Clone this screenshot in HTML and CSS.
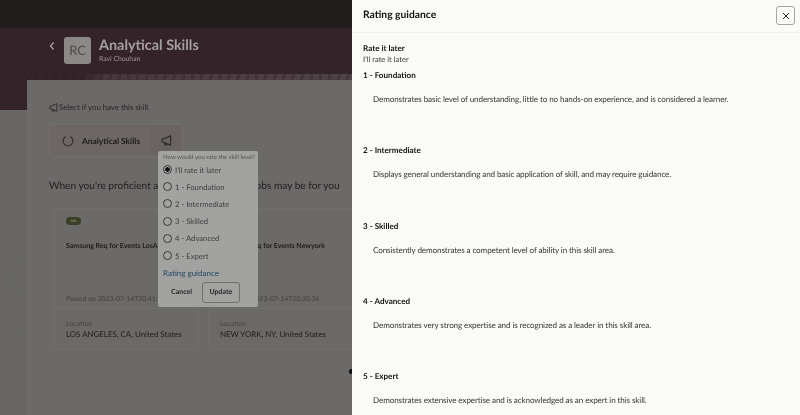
FILE: index.html
```html
<!DOCTYPE html>
<html lang="en">
<head>
  <meta charset="UTF-8" />
  <meta name="viewport" content="width=device-width, initial-scale=1" />
  <title>Analytical Skills</title>
  <link rel="stylesheet" href="styles.css">
</head>
<body>
  <div class="page">
    <div class="topbar"></div>

    <header class="hero">
      <svg class="back" width="8" height="10" viewBox="0 0 8 10"><path d="M5.500 1.500 2.500 5l3 3.500" fill="none" stroke="#a9a6a5" stroke-width="1.200"/></svg>
      <div class="avatar">RC</div>
      <div>
        <h1>Analytical Skills</h1>
        <div class="person">Ravi Chouhan</div>
      </div>
    </header>

    <!-- faint contour lines on the page edge -->
    <svg class="contours" width="27" height="150" viewBox="0 0 27 150">
      <path d="M0 12c8 3 14 9 17 20s8 18 6 32-9 20-6 34 6 24 0 40M0 30c6 3 9 8 11 16s6 16 4 26-7 16-4 28 4 20-2 32M0 50c3 2 5 6 6 12s3 10 2 16-4 12-2 20 2 14-6 22" fill="none" stroke="#6d6c6a" stroke-width=".6"/>
    </svg>

    <main class="sheet">
      <div class="sheet-strip"></div>
      <div class="sheet-body">
        <p class="hint">
          <svg width="9" height="9" viewBox="0 0 16 16"><path d="M1.500 6v4l2.500.5L14 15V1L4 5.500zM5 11l1 3.500h2.500L7.500 12" fill="none" stroke="#2a2626" stroke-width="1.500"/></svg>
          Select if you have this skill.
        </p>

        <div class="skill">
          <div class="skill-name">
            <svg width="12" height="12" viewBox="0 0 14 14"><path d="M4.500 1.700A5.800 5.800 0 1 0 9.500 1.700" fill="none" stroke="#2b2727" stroke-width="1.200"/></svg>
            <span>Analytical Skills</span>
          </div>
          <div class="skill-action">
            <svg width="11" height="11" viewBox="0 0 16 16"><path d="M1.500 6v4l2.500.5L14 15V1L4 5.500zM5 11l1 3.500h2.500L7.500 12" fill="none" stroke="#2a2626" stroke-width="1.500"/></svg>
          </div>
        </div>

        <h2>When you're proficient at this skill, these new jobs may be for you</h2>

        <div class="jobs">
          <article class="job">
            <div class="job-top">
              <span class="tag">Job</span>
              <div class="job-title">Samsung Req for Events LosAngeles</div>
              <div class="posted">Posted on 2023-07-14T20:41:52</div>
            </div>
            <div class="job-loc">
              <div class="loc-label">Location</div>
              <div class="loc-value">LOS ANGELES, CA, United States</div>
            </div>
          </article>
          <article class="job">
            <div class="job-top">
              <span class="tag">Job</span>
              <div class="job-title">Samsung Req for Events Newyork</div>
              <div class="posted">Posted on 2023-07-14T20:30:36</div>
            </div>
            <div class="job-loc">
              <div class="loc-label">Location</div>
              <div class="loc-value">NEW YORK, NY, United States</div>
            </div>
          </article>
        </div>
      </div>
    </main>
  </div>

  <!-- popup over the skill card -->
  <div class="popup">
    <div class="popup-title">How would you rate the skill level?</div>
    <div class="radio on"><i></i>I'll rate it later</div>
    <div class="radio"><i></i>1 - Foundation</div>
    <div class="radio"><i></i>2 - Intermediate</div>
    <div class="radio"><i></i>3 - Skilled</div>
    <div class="radio"><i></i>4 - Advanced</div>
    <div class="radio"><i></i>5 - Expert</div>
    <a class="guidance">Rating guidance</a>
    <div class="popup-actions">
      <span class="btn">Cancel</span>
      <span class="btn btn-line">Update</span>
    </div>
  </div>

  <span class="dot"></span>

  <!-- drawer -->
  <aside class="drawer">
    <div class="drawer-head">
      <h3>Rating guidance</h3>
      <button class="close">
        <svg width="8" height="8" viewBox="0 0 8 8"><path d="M1 1l6 6M7 1 1 7" stroke="#2b2727" stroke-width="1"/></svg>
      </button>
    </div>
    <div class="drawer-body">
      <div class="level-name">Rate it later</div>
      <div class="later">I'll rate it later</div>
      <section class="level">
        <div class="level-name">1 - Foundation</div>
        <p>Demonstrates basic level of understanding, little to no hands-on experience, and is considered a learner.</p>
      </section>
      <section class="level">
        <div class="level-name">2 - Intermediate</div>
        <p>Displays general understanding and basic application of skill, and may require guidance.</p>
      </section>
      <section class="level">
        <div class="level-name">3 - Skilled</div>
        <p>Consistently demonstrates a competent level of ability in this skill area.</p>
      </section>
      <section class="level">
        <div class="level-name">4 - Advanced</div>
        <p>Demonstrates very strong expertise and is recognized as a leader in this skill area.</p>
      </section>
      <section class="level">
        <div class="level-name">5 - Expert</div>
        <p>Demonstrates extensive expertise and is acknowledged as an expert in this skill.</p>
      </section>
    </div>
  </aside>
</body>
</html>
```

FILE: styles.css
```css
html, body {
  margin: 0;
  height: 100%;
  overflow: hidden;
}
body {
  background: #676664;
  font-family: Lato, 'Noto Sans', sans-serif;
  text-rendering: geometricPrecision;
  color: #1f1b1b;
  filter: blur(0.3px);
}
.page {
  height: 415px;
  display: flex;
  flex-direction: column;
  position: relative;
}
.topbar {
  height: 28px;
  background: #211d1c;
}
.hero {
  height: 82px;
  background: #35232a;
  display: flex;
  align-items: flex-start;
  padding: 9px 0 0 48px;
  box-sizing: border-box;
  color: #a9a6a5;
}
.back {
  margin: 4px 8px 0 0;
}
.avatar {
  width: 27px;
  height: 27px;
  border-radius: 3px;
  background: #8b8988;
  color: #4b4847;
  font-size: 13px;
  line-height: 27px;
  text-align: center;
  margin-right: 8px;
}
h1 {
  margin: 0;
  font-size: 14.400px;
  line-height: 17px;
  font-weight: 700;
  color: #a3a09f;
}
.person {
  font-size: 6.800px;
  line-height: 10px;
  color: #9a9796;
}
.contours {
  position: absolute;
  left: 0;
  top: 205px;
}
.sheet {
  flex: 1;
  margin: -36px 0 0 27px;
  position: relative;
  background: #6b6a68;
  border-radius: 3px 0 0 0;
}
.sheet-strip {
  height: 6px;
  border-radius: 3px 0 0 0;
  background:
    repeating-linear-gradient(100deg, rgba(40, 28, 30, .3) 0 3px, transparent 3px 9px),
    linear-gradient(90deg, #35232a 0 7%, #46373a 10%, #51454a 50%, #54484a 58%, #6f6450 70%, #4b3e3c 80%, #6f6646);
}
.sheet-body {
  padding: 21px 0 0 22px;
}
.hint {
  margin: 0;
  font-size: 7.800px;
  line-height: 12px;
  color: #262223;
  display: flex;
  align-items: center;
  gap: 1px;
}
.skill {
  margin-top: 11px;
  width: 134px;
  height: 33px;
  display: flex;
  border: 1px solid #7a6c6a;
  border-radius: 3px;
  box-sizing: border-box;
  background: #6c6765;
}
.skill-name {
  flex: 1;
  display: flex;
  align-items: center;
  gap: 8px;
  padding-left: 12px;
  font-size: 8.400px;
  font-weight: 700;
}
.skill-action {
  width: 32px;
  display: flex;
  align-items: center;
  justify-content: center;
  background: #696463;
}
h2 {
  margin: 22px 0 0;
  font-size: 10.150px;
  line-height: 14px;
  font-weight: 400;
  white-space: nowrap;
  color: #242021;
}
.jobs {
  display: flex;
  gap: 9px;
  margin: 15px 0 0 5px;
}
.job {
  flex: none;
  width: 145px;
  height: 142px;
  border: 1px solid #716f6d;
  border-radius: 3px;
  box-sizing: border-box;
  display: flex;
  flex-direction: column;
}
.job-top {
  flex: 1;
  padding: 8px 11px 0;
}
.tag {
  display: block;
  width: 15px;
  height: 8px;
  border-radius: 4px;
  background: #3a4024;
  color: #8f9480;
  font-size: 4px;
  line-height: 8px;
  text-align: center;
}
.job-title {
  margin-top: 16px;
  font-size: 7px;
  line-height: 10px;
  font-weight: 700;
  white-space: nowrap;
  overflow: hidden;
}
.posted {
  margin-top: 43px;
  font-size: 6.800px;
  line-height: 10px;
  white-space: nowrap;
  color: #423f3e;
}
.job-loc {
  height: 41px;
  border-top: 1px solid #716f6d;
  padding: 11px 11px 0;
  box-sizing: border-box;
}
.loc-label {
  font-size: 7px;
  line-height: 9px;
  color: #454241;
}
.loc-value {
  font-size: 7.900px;
  line-height: 10px;
  color: #1f1b1b;
  white-space: nowrap;
}
.popup {
  position: absolute;
  left: 158px;
  top: 151px;
  width: 100px;
  height: 156px;
  box-sizing: border-box;
  padding: 3px 5px 0;
  background: #a2a2a0;
  border-radius: 2px;
  color: #3d3b3b;
}
.popup-title {
  font-size: 6.100px;
  line-height: 7px;
  color: #545352;
  white-space: nowrap;
}
.radio {
  display: flex;
  align-items: center;
  gap: 3px;
  height: 17.200px;
  font-size: 7.700px;
}
.radio i {
  width: 7px;
  height: 7px;
  border: 1px solid #3a3838;
  border-radius: 50%;
  flex: none;
}
.radio.on i {
  background: radial-gradient(circle, #111 0 2px, transparent 2.500px);
}
.guidance {
  display: block;
  margin-top: 2px;
  font-size: 8px;
  line-height: 14px;
  color: #264860;
}
.popup-actions {
  display: flex;
  align-items: center;
  margin-top: 2px;
  padding-left: 8px;
  gap: 10px;
}
.btn {
  font-size: 7px;
  font-weight: 700;
  line-height: 19px;
  color: #282525;
}
.btn-line {
  border: 1px solid #6f6e6d;
  border-radius: 3px;
  width: 36px;
  text-align: center;
}
.dot {
  position: absolute;
  left: 349px;
  top: 369px;
  width: 3px;
  height: 5px;
  background: #111;
  border-radius: 2px 0 0 2px;
}
.drawer {
  position: absolute;
  left: 352px;
  top: 0;
  width: 448px;
  height: 415px;
  overflow: hidden;
  background: #fafaf8;
}
.drawer-head {
  height: 32px;
  display: flex;
  align-items: center;
  justify-content: space-between;
  padding: 0 5px 0 11px;
  border-bottom: 1px solid #f3f2f0;
}
h3 {
  margin: 0 0 2px;
  font-size: 10.300px;
  font-weight: 700;
  color: #161212;
}
.close {
  width: 19px;
  height: 19px;
  margin-bottom: 1px;
  padding: 0;
  background: #fcfcfb;
  border: 1px solid #a6a4a2;
  border-radius: 3px;
  display: flex;
  align-items: center;
  justify-content: center;
}
.drawer-body {
  padding: 10px 11px 0;
}
.level-name {
  font-size: 8.100px;
  font-weight: 700;
  line-height: 11px;
  color: #161212;
}
.later {
  font-size: 7.600px;
  line-height: 11px;
  color: #3d3938;
  margin-bottom: 5px;
}
.level {
  height: 75.300px;
}
.level p {
  margin: 12px 0 0 10px;
  font-size: 8.100px;
  letter-spacing: -0.11px;
  line-height: 12px;
  color: #3a3635;
  white-space: nowrap;
}
```
